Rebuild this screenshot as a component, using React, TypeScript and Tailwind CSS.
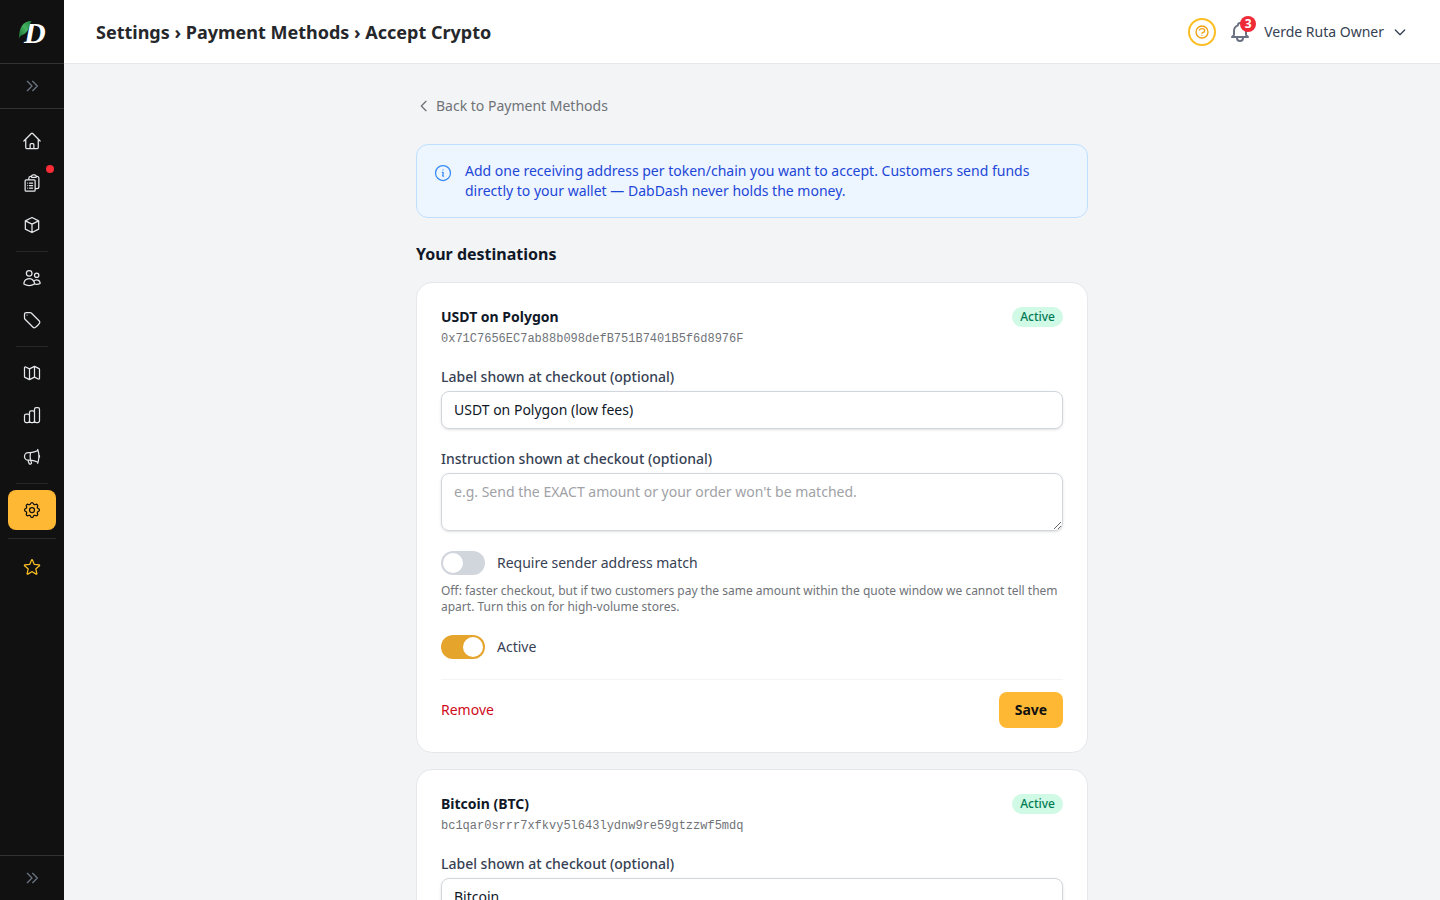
import React, { useState } from "react";
import {
  HiOutlineBell,
  HiOutlineChartBar,
  HiOutlineChevronDoubleRight,
  HiOutlineChevronDown,
  HiOutlineChevronLeft,
  HiOutlineCog,
  HiOutlineCube,
  HiOutlineMap,
  HiOutlineQuestionMarkCircle,
} from "react-icons/hi";
import {
  HiOutlineClipboardDocumentList,
  HiOutlineHome,
  HiOutlineInformationCircle,
  HiOutlineMegaphone,
  HiOutlineStar,
  HiOutlineTag,
  HiOutlineUsers,
} from "react-icons/hi2";

interface NavItem {
  label: string;
  icon: React.ComponentType<{ className?: string }>;
  active?: boolean;
  dot?: boolean;
}

const navGroups: NavItem[][] = [
  [
    { label: "Home", icon: HiOutlineHome },
    { label: "Orders", icon: HiOutlineClipboardDocumentList, dot: true },
    { label: "Products", icon: HiOutlineCube },
  ],
  [
    { label: "Customers", icon: HiOutlineUsers },
    { label: "Discounts", icon: HiOutlineTag },
  ],
  [
    { label: "Zones", icon: HiOutlineMap },
    { label: "Reports", icon: HiOutlineChartBar },
    { label: "Marketing", icon: HiOutlineMegaphone },
  ],
  [{ label: "Settings", icon: HiOutlineCog, active: true }],
];

interface Destination {
  id: string;
  name: string;
  address: string;
  label: string;
}

const destinations: Destination[] = [
  {
    id: "usdt-polygon",
    name: "USDT on Polygon",
    address: "0x71C7656EC7ab88b098defB751B7401B5f6d8976F",
    label: "USDT on Polygon (low fees)",
  },
  {
    id: "btc",
    name: "Bitcoin (BTC)",
    address: "bc1qar0srrr7xfkvy5l643lydnw9re59gtzzwf5mdq",
    label: "Bitcoin",
  },
];

const Logo = () => (
  <svg viewBox="0 0 32 32" className="size-8" role="img" aria-label="DabDash">
    <defs>
      <linearGradient id="leaf" x1="0" y1="1" x2="1" y2="0">
        <stop offset="0" stopColor="#176b34" />
        <stop offset="0.55" stopColor="#45b35f" />
        <stop offset="1" stopColor="#1f8040" />
      </linearGradient>
    </defs>
    <text
      x="8"
      y="27"
      fill="#fff"
      className="font-['Liberation_Serif',serif] text-[30px] font-bold italic"
    >
      D
    </text>
    <path
      d="M3 22.5C3 18 3.500 13.500 5.800 10C8 6.800 11 5 15.500 5C13.500 8 13.600 11 12 14C10.300 17 8 18.500 5.800 19.300C4.500 20 3.800 21 3 22.500Z"
      fill="url(#leaf)"
    />
  </svg>
);

const NavButton = ({ item }: { item: NavItem }) => {
  const Icon = item.icon;
  return (
    <a
      href="#"
      aria-label={item.label}
      className={`relative flex h-10 items-center justify-center rounded-lg ${
        item.active ? "bg-[#ffb833] text-[#111111]" : "text-gray-200"
      }`}
    >
      <Icon className="size-5 [&_path]:stroke-[1.5]" />
      {item.dot && (
        <span className="absolute top-0.5 right-0.5 size-2 rounded-full bg-[#fb2c36]" />
      )}
    </a>
  );
};

const Sidebar = () => (
  <aside className="flex w-16 shrink-0 flex-col bg-[#111111]">
    <div className="flex h-16 items-center justify-center border-b border-[#303234]">
      <Logo />
    </div>
    <button
      aria-label="Expand sidebar"
      className="flex h-[45px] items-center justify-center border-b border-[#303234] text-gray-500"
    >
      <HiOutlineChevronDoubleRight className="size-4" />
    </button>

    <nav className="flex-1 px-2 py-3">
      {navGroups.map((group, i) => (
        <div key={i}>
          {i > 0 && <hr className="mx-2 my-1.5 border-[#272727]" />}
          <div className="flex flex-col gap-0.5">
            {group.map((item) => (
              <NavButton key={item.label} item={item} />
            ))}
          </div>
        </div>
      ))}
      <hr className="my-2 border-[#2a2d2f]" />
      <a
        href="#"
        aria-label="Favorites"
        className="flex h-10 items-center justify-center text-[#fdc023]"
      >
        <HiOutlineStar className="size-5" />
      </a>
    </nav>

    <button
      aria-label="Expand menu"
      className="flex h-[45px] items-center justify-center border-t border-[#303234] text-gray-500"
    >
      <HiOutlineChevronDoubleRight className="size-4" />
    </button>
  </aside>
);

const Header = () => (
  <header className="flex h-16 shrink-0 items-center justify-between border-b border-gray-200 bg-white px-8">
    <h1 className="text-lg font-bold text-[#25272b]">
      Settings › Payment Methods › Accept Crypto
    </h1>
    <div className="flex items-center gap-3">
      <button
        aria-label="Help"
        className="flex size-7 items-center justify-center rounded-full border-2 border-[#fbbf24] text-[#f0a010]"
      >
        <HiOutlineQuestionMarkCircle className="size-4" />
      </button>
      <button aria-label="Notifications" className="relative text-gray-500">
        <HiOutlineBell className="size-6" />
        <span className="absolute -top-1 -right-1 flex size-4 items-center justify-center rounded-full bg-[#ee2b36] text-xs font-bold text-white">
          3
        </span>
      </button>
      <button className="flex items-center gap-2 text-sm text-gray-700">
        Verde Ruta Owner
        <HiOutlineChevronDown className="size-4" />
      </button>
    </div>
  </header>
);

interface ToggleProps {
  label: string;
  defaultChecked?: boolean;
}

const Toggle: React.FC<ToggleProps> = ({ label, defaultChecked }) => (
  <label className="flex items-center gap-3 text-sm text-gray-700">
    <input
      type="checkbox"
      role="switch"
      defaultChecked={defaultChecked}
      className="flex h-6 w-11 appearance-none rounded-full bg-gray-300 p-0.5 transition-colors before:size-5 before:rounded-full before:bg-white before:content-[''] checked:bg-[#e5a52d] checked:before:translate-x-5"
    />
    {label}
  </label>
);

const DestinationCard = ({ destination }: { destination: Destination }) => {
  const { id, name, address } = destination;
  const [label, setLabel] = useState(destination.label);

  return (
    <form
      onSubmit={(e) => e.preventDefault()}
      className="flex flex-col gap-5 rounded-2xl border border-gray-200 bg-white p-6"
    >
      <div className="flex items-start justify-between">
        <div>
          <h3 className="text-sm font-bold text-gray-900">{name}</h3>
          <p className="mt-1 font-['Liberation_Mono',monospace] text-xs text-[#6f7378]">
            {address}
          </p>
        </div>
        <span className="rounded-full bg-emerald-100 px-2 py-0.5 text-xs font-medium text-emerald-700">
          Active
        </span>
      </div>

      <div className="flex flex-col gap-1">
        <label htmlFor={`${id}-label`} className="text-sm font-medium text-gray-700">
          Label shown at checkout (optional)
        </label>
        <input
          id={`${id}-label`}
          type="text"
          value={label}
          onChange={(e) => setLabel(e.target.value)}
          className="rounded-lg border border-gray-300 px-3 py-2 text-sm text-gray-900 shadow-sm"
        />
      </div>

      <div className="flex flex-col gap-1">
        <label htmlFor={`${id}-note`} className="text-sm font-medium text-gray-700">
          Instruction shown at checkout (optional)
        </label>
        <textarea
          id={`${id}-note`}
          rows={2}
          placeholder="e.g. Send the EXACT amount or your order won't be matched."
          className="rounded-lg border border-gray-300 px-3 py-2 text-sm text-gray-900 shadow-sm placeholder:text-[#9fa2a6]"
        />
      </div>

      <div>
        <Toggle label="Require sender address match" />
        <p className="mt-2 text-xs text-[#6f7378]">
          Off: faster checkout, but if two customers pay the same amount within
          the quote window we cannot tell them apart. Turn this on for
          high-volume stores.
        </p>
      </div>

      <Toggle label="Active" defaultChecked />

      <div className="flex items-center justify-between border-t border-gray-100 pt-3">
        <button type="button" className="text-sm text-[#cf0a1c]">
          Remove
        </button>
        <button
          type="submit"
          className="w-16 rounded-lg bg-[#ffb833] py-2 text-center text-sm font-bold text-[#111111]"
        >
          Save
        </button>
      </div>
    </form>
  );
};

const App = () => {
  return (
    <div className="flex h-screen bg-gray-100 font-['Noto_Sans',sans-serif]">
      <Sidebar />
      <div className="flex min-w-0 flex-1 flex-col">
        <Header />
        <main className="flex-1 overflow-y-auto p-8 [scrollbar-width:none]">
          <div className="mx-auto max-w-2xl">
            <a href="#" className="mb-7 flex items-center gap-1 text-sm text-[#6f7378]">
              <HiOutlineChevronLeft className="size-4" />
              Back to Payment Methods
            </a>

            {/* Info banner */}
            <div className="flex items-start gap-3 rounded-xl border border-[#bfdfff] bg-[#edf5fe] p-4 text-sm text-[#1d47d8]">
              <HiOutlineInformationCircle className="mt-0.5 size-5 shrink-0 text-[#358af5]" />
              <p>
                Add one receiving address per token/chain you want to accept.
                Customers send funds directly to your wallet — DabDash never
                holds the money.
              </p>
            </div>

            <h2 className="mt-6 mb-4 text-base font-bold text-gray-900">
              Your destinations
            </h2>
            <div className="flex flex-col gap-4">
              {destinations.map((destination) => (
                <DestinationCard key={destination.id} destination={destination} />
              ))}
            </div>
          </div>
        </main>
      </div>
    </div>
  );
};

export default App;
